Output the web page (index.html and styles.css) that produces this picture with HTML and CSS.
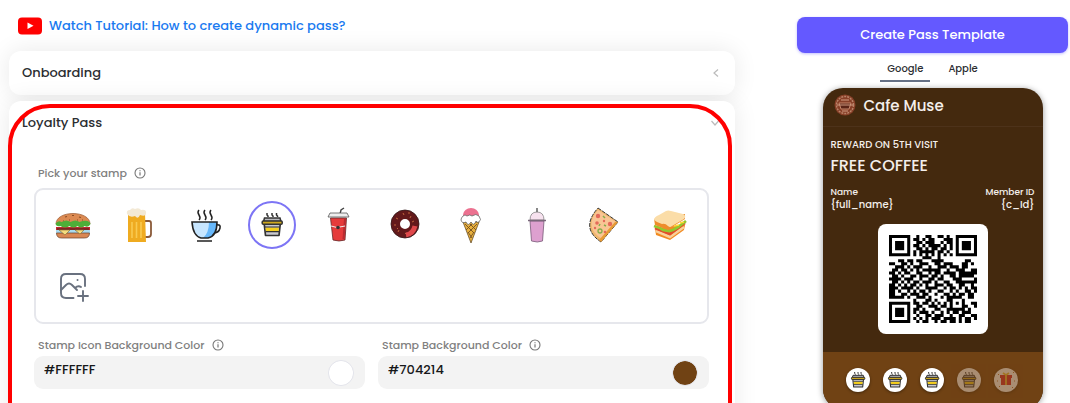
FILE: index.html
```
<!DOCTYPE html>
<html lang="en">
<head>
<meta charset="utf-8">
<meta name="viewport" content="width=device-width, initial-scale=1">
<title>Create Pass Template</title>
<link rel="stylesheet" href="styles.css">
</head>
<body>

<svg class="sprite" aria-hidden="true">
  <symbol id="info" viewBox="0 0 12 12">
    <circle cx="6" cy="6" r="5" fill="none" stroke="#777" stroke-width="1.1"/>
    <path d="M6 5.3v3.2M6 3.2v1.1" stroke="#777" stroke-width="1.2"/>
  </symbol>
  <symbol id="coffee" viewBox="0 0 36 36">
    <path d="M13 6v2l1 1v1M18 6v2l1 1v1M22.500 6v2l1 1v1" fill="none" stroke="#333" stroke-width="1.500"/>
    <path d="M10 15h16.500l-1.500 13.500H11.500z" fill="#c9c9cf" stroke="#333" stroke-width="1.700" stroke-linejoin="round"/>
    <path d="M11.500 20.500H25l-.5 4H12z" fill="#f5cf1d"/>
    <path d="M11 20h14.500M11.800 24.700H25" stroke="#333" stroke-width="1.200"/>
    <path d="M10.500 11H26l1 3.500H9.500z" fill="#b9b9bd" stroke="#333" stroke-width="1.500"/>
    <rect x="8.200" y="14" width="20" height="3.200" rx="1" fill="#cfa91f" stroke="#333" stroke-width="1.500"/>
  </symbol>
</svg>

<div class="page">

<main class="settings">
  <a class="tutorial" href="#">
    <svg width="24" height="18" viewBox="0 0 24 18" aria-hidden="true">
      <rect width="24" height="17" y=".5" rx="4" fill="#f00"/>
      <path d="M9.500 5.500v6.500l6-3.200z" fill="#fff"/>
    </svg>
    Watch Tutorial: How to create dynamic pass?
  </a>

  <section class="card">
    <button class="card-head" type="button" aria-expanded="false">Onboarding
      <svg width="8" height="10" viewBox="0 0 8 10"><path d="M6 1.500L2 5l4 3.500" fill="none" stroke="#bbb" stroke-width="1.200"/></svg>
    </button>
  </section>

  <section class="card highlighted">
    <button class="card-head" type="button" aria-expanded="true">Loyalty Pass
      <svg width="10" height="8" viewBox="0 0 10 8"><path d="M1.500 2L5 6l3.500-4" fill="none" stroke="#bbb" stroke-width="1.200"/></svg>
    </button>

    <div class="card-body">
      <div class="caption" id="stamp-caption">Pick your stamp <svg width="12" height="12"><use href="#info"/></svg></div>

      <div class="stamps" role="radiogroup" aria-labelledby="stamp-caption">
        <label class="stamp"><input type="radio" name="stamp" aria-label="Burger">
          <svg viewBox="0 0 36 36">
            <path d="M1 17C1 3 35 3 35 17z" fill="#dc8a52" stroke="#9a5930" stroke-width=".7"/>
            <path d="M10 10l2-.5M17 8.500h2M24 10l2 .5M14 13h1M22 13h1M27 13h1M8 14h1" stroke="#8b4c22" stroke-width="1.200"/>
            <path d="M1 20h34v3H1z" fill="#c3272e"/>
            <path d="M2 22h32" stroke="#52251f" stroke-width="1.200"/>
            <path d="M.5 17q2-4 6-2 5-3 9 0 5-3 9 0 5-2 8-1 3 1 3 3-2 4-6 2-3 3-7 0-4 3-8 0-5 3-9 0-4 1-5-2z" fill="#4eae38"/>
            <path d="M1 23h34v3H1z" fill="#a9d9ee"/>
            <path d="M1.500 26h33q0 5-5 5h-23q-5 0-5-5z" fill="#d98753" stroke="#653d28" stroke-width=".7"/>
            <path d="M4 23h11l-5 5zM20 23h9l-4 4z" fill="#f5dc7f" stroke="#806831" stroke-width=".6"/>
          </svg></label>
        <label class="stamp"><input type="radio" name="stamp" aria-label="Beer">
          <svg viewBox="0 0 36 36">
            <path d="M23 14h5q2 0 2 2v11q0 3-3 3h-4" fill="none" stroke="#8a5a39" stroke-width="1.800"/>
            <path d="M7 6h17l1 29H7z" fill="#efab20"/>
            <path d="M11 15v16M15.500 15v16M20 15v16" stroke="#f9ca50" stroke-width="1.600"/>
            <path d="M6 7q-1-4 3-4 2-3 5-1 4-2 6 1 6-1 5 4-1 3-6 1-2 5-5 1-5 2-8-2z" fill="#f3e9d5"/>
          </svg></label>
        <label class="stamp"><input type="radio" name="stamp" aria-label="Tea">
          <svg viewBox="0 0 36 36">
            <path d="M11 13q2-2 0-5t0-5M17 13q2-2 0-5t0-5M23 13q2-2 0-5t0-5" fill="none" stroke="#222" stroke-width="1.500"/>
            <path d="M28 18q5-1 4 3-1 5-7 5" fill="none" stroke="#222" stroke-width="1.600"/>
            <path d="M4 15h25q0 14-9 16h-7Q5 29 4 15z" fill="#c7e6ff"/>
            <path d="M21 15h8q0 14-9 16h-5q6-5 6-16z" fill="#68b8fa"/>
            <path d="M4 15h25q0 14-9 16h-7Q5 29 4 15zM9 34h15" fill="none" stroke="#222" stroke-width="1.600"/>
          </svg></label>
        <label class="stamp"><input type="radio" name="stamp" aria-label="Coffee" checked>
          <svg><use href="#coffee"/></svg></label>
        <label class="stamp"><input type="radio" name="stamp" aria-label="Soda">
          <svg viewBox="0 0 36 36">
            <path d="M20 7l1-4 3-2" fill="none" stroke="#444" stroke-width="1.400"/>
            <path d="M10.500 11h16l-1.500 22q-6 2-12 0z" fill="#e53b3b" stroke="#632929" stroke-width=".8"/>
            <path d="M24 12h2l-1.500 20h-2z" fill="#b92b30"/>
            <path d="M8 10l2-4h17l2 4z" fill="#eee" stroke="#555" stroke-width=".8"/>
            <path d="M11 19l6 1.500 8-1.500" fill="none" stroke="#eee"/>
            <circle cx="18" cy="20.500" r="1.800" fill="#333"/>
          </svg></label>
        <label class="stamp"><input type="radio" name="stamp" aria-label="Donut">
          <svg viewBox="0 0 36 36">
            <circle cx="18" cy="17" r="9.500" fill="none" stroke="#63191b" stroke-width="9"/>
            <path d="M28 19q-2 8-9 9" fill="none" stroke="#df484b" stroke-width="5"/>
            <circle cx="18" cy="17" r="14" fill="none" stroke="#32191a" stroke-width=".8"/>
            <path d="M9 11l2 1M16 6l1 2M24 9l-1 2M7 18h2M11 25l1-2M18 26l1 1M27 14l-2 1M21 6h2M10 21l1 1" stroke="#bf653d"/>
          </svg></label>
        <label class="stamp"><input type="radio" name="stamp" aria-label="Ice cream">
          <svg viewBox="0 0 36 36">
            <path d="M10 15h16l-8 21z" fill="#e8b03e" stroke="#59401c" stroke-width=".7"/>
            <path d="M12 17l9 9M16 16l7 7M24 17l-9 9M20 16l-7 7M15 25l4 6M21 25l-4 6" stroke="#735021" stroke-width=".9"/>
            <path d="M10 10C9-2 27-2 26 10z" fill="#ec7190"/>
            <path d="M10 9q2-2 4 0 3-2 5 0 4-3 7 0 3 4 0 6-2 1-3-1-2 6-5 1-3 5-5 0-4 2-5-2 0-2 2-4z" fill="#fff" stroke="#555" stroke-width=".7"/>
          </svg></label>
        <label class="stamp"><input type="radio" name="stamp" aria-label="Milkshake">
          <svg viewBox="0 0 36 36">
            <path d="M18 7V1" stroke="#555" stroke-width="1.400"/>
            <path d="M11 13Q11 5 18 5t7 8z" fill="#f7e2ef" stroke="#777" stroke-width=".7"/>
            <path d="M11 14h14l-1.500 20q-5 2-11 0z" fill="#dda0cf" stroke="#775b77" stroke-width=".8"/>
            <path d="M9 13.500h18" stroke="#79677a" stroke-width="1.500"/>
          </svg></label>
        <label class="stamp"><input type="radio" name="stamp" aria-label="Pizza">
          <svg viewBox="0 0 36 36">
            <path d="M12 1L32 15 15 35Q-6 21 12 1z" fill="#edb66c" stroke="#333" stroke-width="1" stroke-dasharray="4 1"/>
            <path d="M12 3l18 12-14 17Q-3 20 12 3z" fill="#f9c594"/>
            <path d="M32 15L15 35l-2-2 16-18z" fill="#e89b34"/>
            <g fill="#e46a5a"><circle cx="12" cy="9" r="2.200"/><circle cx="24" cy="17" r="2.200"/><circle cx="11" cy="16" r="1.800"/><circle cx="18" cy="14" r="1.200"/><circle cx="19" cy="25" r="1.300"/><circle cx="9" cy="21" r="1.200"/></g>
            <circle cx="14" cy="24" r="2" fill="none" stroke="#83ad49" stroke-width="1.300"/>
            <path d="M17 9l2 2M18 18l2 1M13 19l1-2" stroke="#83ad49" stroke-width="1.500"/>
          </svg></label>
        <label class="stamp"><input type="radio" name="stamp" aria-label="Sandwich">
          <svg viewBox="0 0 36 36">
            <path d="M3 21l1 7 14 5 14-10 1-5z" fill="#f28a20"/>
            <path d="M4 24l14 6 14-10" fill="none" stroke="#f9d19b" stroke-width="2.500"/>
            <path d="M3 21l15 6 15-11" fill="none" stroke="#e34b2d" stroke-width="2.500"/>
            <path d="M2 19l6 2 3 2 6 1 4-1 5-3 4-3 4-3" fill="none" stroke="#94c72d" stroke-width="2.800"/>
            <path d="M2 12l1 6 13 5 4-3 13-8v-5z" fill="#ee8c2b"/>
            <path d="M2 13Q2 10 7 8l7-4q2-1 5 0l12 3q4 2 1 5L20 19q-2 2-4 0-3-3-6-2l-5-2z" fill="#fbdda8"/>
            <path d="M22 19l5-1M28 16l4-1" stroke="#ffd633" stroke-width="1.500"/>
          </svg></label>
        <button class="stamp add" type="button" aria-label="Add your own stamp">
          <svg viewBox="0 0 36 36" fill="none" stroke="#69717f" stroke-width="1.900" stroke-linecap="round" stroke-linejoin="round">
            <path d="M18.500 29H11q-5 0-5-5V10q0-5 5-5h14q5 0 5 5v7"/>
            <path d="M6 21l5-5q3-3 6 0l5 5M20 19q3-3 6-1M22.500 11h.1M28 22v10M23 27h10"/>
          </svg>
        </button>
      </div>

      <div class="fields">
        <div>
          <label class="caption" for="icon-bg">Stamp Icon Background Color <svg width="12" height="12"><use href="#info"/></svg></label>
          <div class="field">
            <input type="text" id="icon-bg" value="#FFFFFF">
            <input type="color" aria-label="Icon background swatch" value="#ffffff">
          </div>
        </div>
        <div>
          <label class="caption" for="stamp-bg">Stamp Background Color <svg width="12" height="12"><use href="#info"/></svg></label>
          <div class="field">
            <input type="text" id="stamp-bg" value="#704214">
            <input type="color" aria-label="Background swatch" value="#704214">
          </div>
        </div>
      </div>
    </div>
  </section>
</main>

<aside class="preview">
  <button class="create" type="button">Create Pass Template</button>
  <nav class="tabs">
    <a class="active" href="#">Google</a>
    <a href="#">Apple</a>
  </nav>

  <div class="pass">
    <div class="pass-head">
      <svg width="22" height="22" viewBox="0 0 22 22" aria-hidden="true">
        <circle cx="11" cy="11" r="10.500" fill="#873f27"/>
        <circle cx="11" cy="11" r="8.500" fill="none" stroke="#b98368" stroke-width="1.500" stroke-dasharray="2 1"/>
        <path d="M5 9h12l-2 6H7z" fill="#5b2517" stroke="#c4866a"/>
        <path d="M3 11h16M7 6h8M8 17h6" stroke="#cf9b82" stroke-width="1.200"/>
      </svg>
      Cafe Muse
    </div>
    <div class="pass-body">
      <div class="reward">REWARD ON 5TH VISIT</div>
      <div class="prize">FREE COFFEE</div>
      <dl class="member">
        <div><dt>Name</dt><dd>{full_name}</dd></div>
        <div><dt>Member ID</dt><dd>{c_Id}</dd></div>
      </dl>
      <svg class="qr" id="qr" viewBox="0 0 29 29" role="img" aria-label="QR code"><path/></svg>
    </div>
    <div class="pass-stamps">
      <span><svg><use href="#coffee"/></svg></span>
      <span><svg><use href="#coffee"/></svg></span>
      <span><svg><use href="#coffee"/></svg></span>
      <span class="empty"><svg><use href="#coffee"/></svg></span>
      <span class="empty"><svg viewBox="0 0 24 24">
        <path d="M7 9h10v8H7zM6 7h12v3H6z" fill="#d5272b"/>
        <path d="M12 7v10M9 5l3 2 3-2" fill="none" stroke="#efbd39" stroke-width="1.800"/>
        <path d="M4 6l1 1M19 4l1 1M3 13h1M20 13h1M5 19l1-1M18 19l1 1" stroke="#b67532"/>
      </svg></span>
    </div>
  </div>
</aside>

</div>

<script src="script.js"></script>
</body>
</html>
```
FILE: styles.css
```
* {box-sizing:border-box;margin:0;padding:0;}
html, body {height:100%;}
body {background:#fff;font-family:Poppins,Inter,sans-serif;font-size:13px;font-weight:500;color:#2b2d31;overflow:hidden;}
button, input {font:inherit;color:inherit;border:0;background:none;}
a {text-decoration:none;color:inherit;}
svg {display:block;flex:none;}
.sprite {position:absolute;width:0;height:0;}

.page {display:grid;grid-template-columns:1fr 271px;gap:62px;padding:0 2px 0 9px;}

/* left side */
.tutorial {display:flex;align-items:center;gap:7px;height:51px;padding-left:9px;color:#1a7af0;}
.card {position:relative;background:#fff;border-radius:12px;box-shadow:0 0 24px rgba(0,0,0,.09);margin-bottom:6px;}
.card-head {display:flex;justify-content:space-between;align-items:center;width:100%;height:44px;padding:0 15px 0 13px;}
.card-body {padding:20px 26px 60px 25px;}
.highlighted::after {content:"";position:absolute;top:3px;left:-1px;right:3px;bottom:0;border:4px solid #f00;border-radius:42px;pointer-events:none;}

.caption {display:flex;align-items:center;gap:7px;height:16px;padding-left:4px;font-size:11px;color:#808080;}
.stamps {display:grid;grid-template-columns:repeat(10,1fr);margin:7px 0 13px;padding:4px;border:2px solid #e6e7ec;border-radius:9px;}
.stamp {position:relative;display:flex;align-items:center;justify-content:center;height:62px;cursor:pointer;}
.stamp svg {width:36px;height:36px;}
.stamp input {position:absolute;width:48px;height:48px;appearance:none;border-radius:50%;}
.stamp input:checked {border:2px solid #7d75f5;}

.fields {display:grid;grid-template-columns:1fr 1fr;gap:13px;}
.field {display:flex;align-items:center;height:33px;margin-top:3px;padding:0 11px 0 10px;background:#f3f3f3;border-radius:9px;}
.field input[type=text] {flex:1;min-width:0;height:28px;align-self:flex-start;color:#17181a;}
.field input[type=color] {appearance:none;width:26px;height:26px;border:1px solid #e3e4ec;border-radius:50%;overflow:hidden;}
::-webkit-color-swatch-wrapper {padding:0;}
::-webkit-color-swatch {border:0;border-radius:50%;}

/* right side */
.preview {padding-top:17px;}
.create {display:block;width:100%;height:36px;background:#6459ff;border-radius:8px;color:#fff;font-size:13px;box-shadow:0 1px 3px rgba(100,89,255,.4);}
.tabs {display:flex;justify-content:center;gap:11px;height:35px;padding-top:5px;font-size:10px;}
.tabs a {height:24px;padding:0 7px;line-height:21px;}
.tabs .active {border-bottom:2px solid #667085;}

.pass {width:220px;margin:0 auto;background:#44290e;border-radius:20px;overflow:hidden;color:#f4efeb;box-shadow:0 1px 6px rgba(0,0,0,.4);}
.pass-head {display:flex;align-items:center;gap:8px;height:39px;padding:0 11px 4px;font-size:15px;border-bottom:1px solid #4d321a;}
.pass-body {padding:10px 8px 18px;}
.reward {font-size:10px;line-height:16px;}
.prize {font-size:16px;line-height:25px;}
.member {display:flex;justify-content:space-between;margin:8px 0 12px;font-size:10px;line-height:14px;}
.member div:last-child {text-align:right;}
.member dt {font-size:9px;line-height:12px;}
.qr {width:110px;height:110px;margin:0 auto;padding:11px;background:#fff;border-radius:8px;}

.pass-stamps {display:flex;justify-content:center;gap:13px;height:57px;padding:16px 2px 0 0;background:#704214;}
.pass-stamps span {display:flex;align-items:center;justify-content:center;width:24px;height:24px;border-radius:50%;background:#fff;box-shadow:0 1px 3px rgba(0,0,0,.4);}
.pass-stamps svg {width:24px;height:24px;}
.pass-stamps .empty {opacity:.4;}
```
FILE: script.js
```
var rows = [
  '11111110010011001101001111111',
  '10000010110101100011101000001',
  '10111010011011100101101011101',
  '10111010110101111010101011101',
  '10111010011010110110101011101',
  '10000010101111101101001000001',
  '11111110101010101010101111111',
  '00000000000111001000000000000',
  '00011011011000111100000001100',
  '11001101001110011011100011010',
  '00111010111001001110111011000',
  '01101101010111111001001110011',
  '11010110011001011011110111111',
  '01101001101110110100110111110',
  '11110111001001101100011100001',
  '01101010110111010011001111111',
  '11010101101010011101100110010',
  '11101111010011110010110101011',
  '11010010101101001100101001101',
  '11001101110110010011010110110',
  '11111010011101000101111100110',
  '00000000100011010001100010000',
  '11111110110110101010101010011',
  '10000010011001110110100011001',
  '10111010110100011001111110100',
  '10111010101110100101011011100',
  '10111010010011011100100110011',
  '10000010101010111011110101101',
  '11111110010110010110110101100'
];

var d = '';
for (var y = 0; y < rows.length; y++) {
  for (var x = 0; x < rows[y].length; x++) {
    if (rows[y][x] == '1') {
      d += 'M' + x + ' ' + y + 'h1v1h-1z';
    }
  }
}
document.querySelector('#qr path').setAttribute('d', d);
```
